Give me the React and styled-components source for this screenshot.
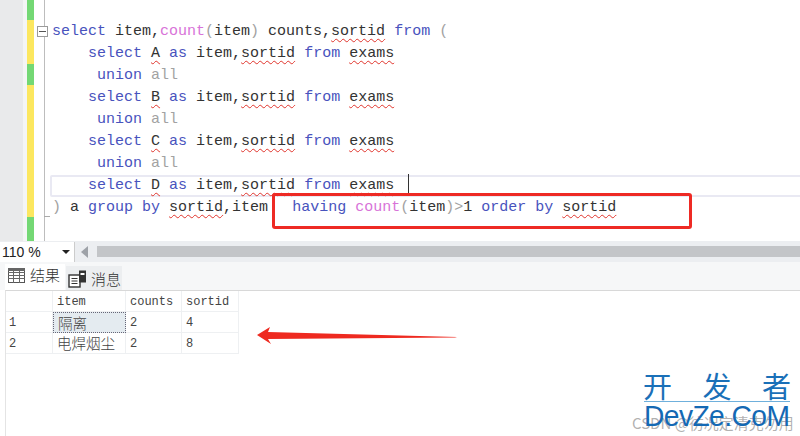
import React from "react";
import styled, { createGlobalStyle } from "styled-components";

const Global = createGlobalStyle`
  html, body { margin: 0; padding: 0; background: #fff; }
  #root { width: 800px; height: 436px; }
`;
const Page = styled.div`
  position: relative; width: 800px; height: 436px; overflow: hidden; background: #fff;
  display: flex; flex-direction: column;
  font-family: "Liberation Mono", "Noto Sans CJK SC", monospace;
`;
const Editor = styled.div`height: 241px; display: flex; flex: none; overflow: hidden;`;
const Margin = styled.div`width: 23px; background: #e9eaeb; flex: none;`;
const Spacer = styled.div`width: 4px; background: #f4f5f5; flex: none;`;
const ChangeBar = styled.div`width: 7px; display: flex; flex-direction: column; flex: none;`;
const Change = styled.div`
  height: ${p => p.$h}px;
  background: ${p => (p.$saved ? "#74d874" : "#fce75f")};
`;
const FoldColumn = styled.div`
  width: 10px; border-right: 1px solid #bdbdbd; flex: none; position: relative;
`;
const FoldBox = styled.div`
  position: absolute; left: 3px; top: 26px; width: 11px; height: 11px; box-sizing: border-box;
  border: 1px solid #9a9a9a; background: #fff; display: flex; align-items: center; justify-content: center;
  &::after { content: ""; width: 7px; height: 1px; background: #555; }
`;
const FoldEnd = styled.div`
  position: absolute; left: 10px; top: 216px; width: 6px; height: 1px; background: #aaa;
`;
const Code = styled.div`
  flex: 1; padding: 21px 0 0 7px; display: flex; flex-direction: column;
  font-size: 15px; color: #333;
`;
const Line = styled.div`
  height: 22px; line-height: 22px; white-space: pre; box-sizing: border-box; position: relative; flex: none;
  padding-left: ${p => p.$indent || 0}px;
  ${p => p.$current && `
    margin-left: -2px; margin-right: -6px; padding-left: ${(p.$indent || 0) + 2}px;
    box-shadow: inset 0 0 0 2px #e9e9f3;
    border-radius: 2px;
  `}
`;
const Kw = styled.span`color: #4853bd;`;
const Fn = styled.span`color: #d873d8;`;
const Dim = styled.span`color: #a2a2a2;`;
const Tight = styled.span`margin-left: -3px;`;
const Sq = styled.span`
  text-decoration: underline wavy #e0342c 1px;
  text-underline-offset: 3px;
`;
const Caret = styled.span`
  position: absolute; left: 357.5px; top: -1px; width: 1px; height: 22px; background: #333;
`;
const Bar = styled.div`
  height: 21px; flex: none; background: #eceef1; display: flex; align-items: center;
`;
const Zoom = styled.div`
  width: 75px; height: 20px; box-sizing: border-box; background: #fff; border-right: 1px solid #ccc;
  display: flex; align-items: center; justify-content: space-between; padding: 0 4px 0 2px;
  font: 14px "Liberation Sans", sans-serif; color: #222;
`;
const Caretdown = styled.span`
  width: 0; height: 0; border-left: 4px solid transparent; border-right: 4px solid transparent;
  border-top: 4px solid #222;
`;
const ArrowLeft = styled.span`
  margin-left: 6px; width: 0; height: 0; border-top: 6px solid transparent; border-bottom: 6px solid transparent;
  border-right: 7px solid #9ea2a8;
`;
const Thumb = styled.div`flex: 1; height: 11px; margin-left: 9px; background: #c3c5c8;`;
const Tabs = styled.div`
  height: 28px; flex: none; display: flex; align-items: flex-end; padding: 0 0 0 5px; background: #f6f7f8;
  font: 300 15px "Noto Sans CJK SC", sans-serif; color: #333;
`;
const Tab = styled.div`
  height: ${p => (p.$active ? 26 : 24)}px; width: ${p => (p.$active ? 60 : 56)}px; box-sizing: border-box;
  background: ${p => (p.$active ? "#fff" : "#eceef0")};
  display: flex; align-items: flex-start; gap: ${p => (p.$active ? 5 : 4)}px;
  padding: ${p => (p.$active ? "2px 0 0 3px" : "4px 0 0 2px")};
  line-height: 18px; white-space: nowrap; margin-right: 1px; flex: none;
`;
const Results = styled.div`
  flex: 1; margin-left: 5px; border-top: 1px solid #d8d8d8; border-left: 1px solid #e4e4e4; background: #fff;
`;
const Grid = styled.div`
  display: grid; grid-template-columns: 47px 73px 56px 57px; grid-auto-rows: 21px; width: 233px;
  font-size: 12px; color: #444;
`;
const Cell = styled.div`
  box-sizing: border-box; border-right: 1px solid #eef0f2; border-bottom: 1px solid #eef0f2;
  display: flex; align-items: center; padding: ${p => (p.$cjk ? 0 : 2)}px 0 0 ${p => (p.$num ? 3 : 4)}px;
  font-family: ${p => (p.$cjk ? '"Noto Sans CJK SC", sans-serif' : '"Liberation Mono", monospace')};
  ${p => p.$cjk && "font-size: 14.5px; font-weight: 300; line-height: 18px;"}
  ${p => p.$selected && "background: #e4ebf0; border: 1px dotted #667;"}
`;
const RedBox = styled.div`
  position: absolute; left: 272px; top: 193px; width: 420px; height: 36px; box-sizing: border-box;
  border: 3px solid #ee2a24; border-radius: 3px;
`;
const Arrow = styled.svg`position: absolute; left: 250px; top: 320px;`;
const Mark = styled.div`
  position: absolute; left: 632px; top: 368px; width: 168px; height: 68px; color: #1469b4;
`;
const MarkCn = styled.div`
  position: absolute; left: 11px; top: 0; width: 148px; font: 29px/34px "Noto Sans CJK SC", sans-serif;
  display: flex; justify-content: space-between; color: #1a70b8;
`;
const MarkRule = styled.div`position: absolute; left: 12px; top: 33px; width: 146px; height: 1px; background: #6fb0dc;`;
const MarkEn = styled.div`
  position: absolute; left: 12px; top: 32px; font: 30px/32px "Liberation Sans", sans-serif; letter-spacing: -0.6px; white-space: nowrap;
  transform: scaleX(0.94); transform-origin: left center;
`;
const MarkCsdn = styled.div`
  position: absolute; left: 0; top: 45px; font: 15px/20px "Noto Sans CJK SC", sans-serif; color: rgba(110,110,110,.55); white-space: nowrap;
`;

const Sel = ({ l }) => (
  <Line $indent={36}>
    <Kw>select</Kw> <Sq>{l}</Sq> <Kw>as</Kw> item,<Sq>sortid</Sq> <Kw>from</Kw> <Sq>exams</Sq>
  </Line>
);
const Sel2 = ({ l }) => (
  <Line $indent={36} $current>
    <Kw>select</Kw> <Sq>{l}</Sq> <Kw>as</Kw> item,<Sq>sortid</Sq> <Kw>from</Kw> <Sq>exams</Sq>
    <Caret />
  </Line>
);
const Union = () => (
  <Line $indent={45}>
    <Kw>union</Kw> <Dim>all</Dim>
  </Line>
);

const GridIcon = () => (
  <svg width="17" height="15" viewBox="0 0 17 15" style={{ marginTop: 2 }}>
    <rect x="0.5" y="0.5" width="16" height="14" fill="#fff" stroke="#555" />
    <path d="M0 4.5h17M0 7.5h17M0 10.5h17M5.5 0v15M11.5 0v15" stroke="#666" fill="none" />
    <rect x="0" y="0" width="17" height="3" fill="#666" />
  </svg>
);
const MsgIcon = () => (
  <svg width="19" height="18" viewBox="0 0 19 18">
    <rect x="1" y="5" width="11" height="12" fill="#fff" stroke="#333" strokeWidth="1.4" />
    <path d="M3.5 8.5h6M3.5 11h6M3.5 13.5h6" stroke="#333" />
    <rect x="11" y="0.5" width="7" height="12" fill="#333" />
    <rect x="12.5" y="3" width="4" height="2" fill="#fff" />
  </svg>
);

export default function App() {
  return (
    <Page>
      <Global />
      <Editor>
        <Margin />
        <Spacer />
        <ChangeBar>
          <Change $saved $h={20} />
          <Change $h={44} />
          <Change $saved $h={21} />
          <Change $h={132} />
          <Change $saved $h={24} />
        </ChangeBar>
        <FoldColumn>
          <FoldBox />
          <FoldEnd />
        </FoldColumn>
        <Code>
          <Line>
            <Kw>select</Kw> item,<Fn>count</Fn><Dim>(</Dim>item<Dim>)</Dim> counts,<Sq>sortid</Sq> <Kw>from</Kw> <Dim>(</Dim>
          </Line>
          <Sel l="A" />
          <Union />
          <Sel l="B" />
          <Union />
          <Sel l="C" />
          <Union />
          <Sel2 l="D" />
          <Line>
            <Dim>)</Dim> a <Kw>group</Kw> <Kw>by</Kw> <Sq>sortid</Sq>,item   <Tight><Kw>having</Kw> <Fn>count</Fn><Dim>(</Dim>item<Dim>)&gt;</Dim>1 <Kw>order</Kw> <Kw>by</Kw> <Sq>sortid</Sq></Tight>
          </Line>
        </Code>
      </Editor>
      <Bar>
        <Zoom>110 %<Caretdown /></Zoom>
        <ArrowLeft />
        <Thumb />
      </Bar>
      <Tabs>
        <Tab $active><GridIcon />结果</Tab>
        <Tab><MsgIcon />消息</Tab>
      </Tabs>
      <Results>
        <Grid>
          <Cell />
          <Cell>item</Cell>
          <Cell>counts</Cell>
          <Cell>sortid</Cell>
          <Cell $num>1</Cell>
          <Cell $cjk $selected>隔离</Cell>
          <Cell>2</Cell>
          <Cell>4</Cell>
          <Cell $num>2</Cell>
          <Cell $cjk>电焊烟尘</Cell>
          <Cell>2</Cell>
          <Cell>8</Cell>
        </Grid>
      </Results>
      <RedBox />
      <Arrow width="210" height="30" viewBox="0 0 210 30">
        <path d="M7 15 L20 7 L18 12 L207 17 L205 17.5 L18 19 L21 24 Z" fill="#ee2a20" />
      </Arrow>
      <Mark>
        <MarkCsdn>CSDN @彷况定清克勿用</MarkCsdn>
        <MarkCn><span>开</span><span>发</span><span>者</span></MarkCn>
        <MarkRule />
        <MarkEn>DevZe.CoM</MarkEn>
      </Mark>
    </Page>
  );
}
